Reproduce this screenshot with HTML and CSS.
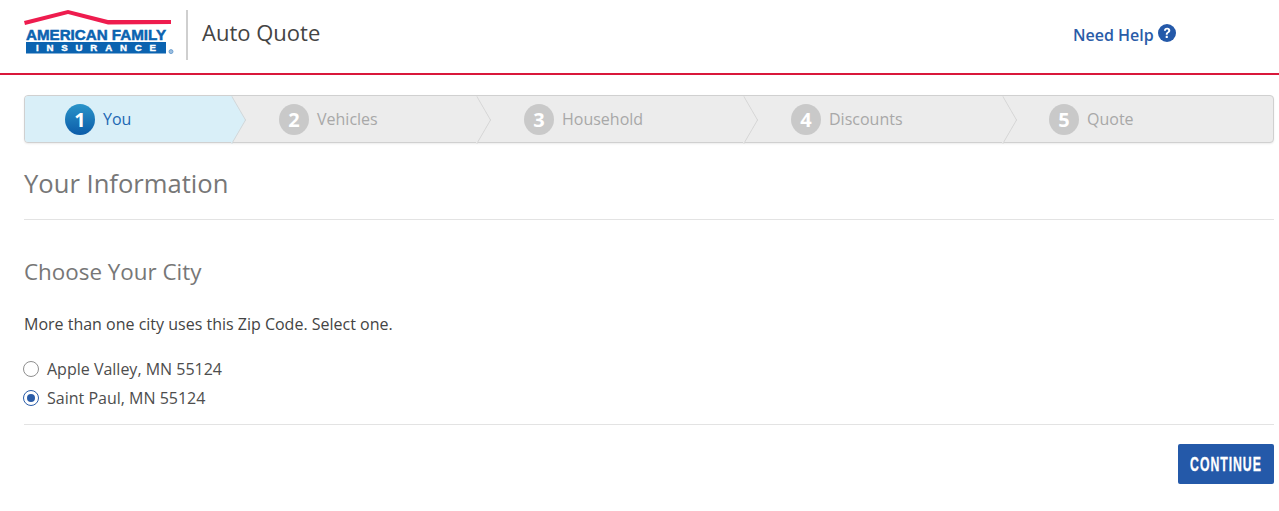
FILE: index.html
```html
<!DOCTYPE html>
<html lang="en">
<head>
<meta charset="utf-8">
<title>Auto Quote</title>
<link rel="stylesheet" href="styles.css">
</head>
<body>
<header class="site-header">
  <svg class="logo" viewBox="0 0 151 46" width="151" height="46" aria-label="American Family Insurance">
    <path class="logo-roof" d="M0 11 L44 0 L84 10 L147 10 V14 L84 14.5 L44 4 L1 15 Z"/>
    <text class="logo-top" x="2" y="30" textLength="140" lengthAdjust="spacingAndGlyphs">AMERICAN FAMILY</text>
    <rect class="logo-band" x="2" y="32" width="140" height="11.5"/>
    <text class="logo-sub" x="12" y="41" textLength="120">INSURANCE</text>
    <circle class="logo-reg" cx="147" cy="41.6" r="2"/>
  </svg>
  <div class="divider"></div>
  <div class="app-title">Auto Quote</div>
  <a class="help" href="#"><span>Need Help</span>
    <svg class="help-icon" viewBox="0 0 18 18" width="18" height="18"><circle cx="9" cy="9" r="9"/><path d="M5.9 6.7C6 4.9 7.3 3.8 9.2 3.8c1.8 0 3.1 1.1 3.1 2.7 0 1.2-.6 1.9-1.6 2.5-.8.5-1 .8-1 1.5v.3H7.8v-.5c0-1.1.4-1.7 1.3-2.3.8-.5 1.1-.9 1.1-1.5 0-.6-.4-1-1.1-1-.7 0-1.2.5-1.2 1.2Z"/><rect x="7.7" y="11.8" width="2.1" height="2.2" rx=".3"/></svg>
  </a>
</header>

<main class="content">
  <ol class="steps">
    <li class="step step-1 active"><span class="num">1</span><span class="label">You</span></li>
    <li class="step step-2"><span class="num">2</span><span class="label">Vehicles</span></li>
    <li class="step step-3"><span class="num">3</span><span class="label">Household</span></li>
    <li class="step step-4"><span class="num">4</span><span class="label">Discounts</span></li>
    <li class="step step-5"><span class="num">5</span><span class="label">Quote</span></li>
  </ol>

  <h1 class="page-title">Your Information</h1>
  <h2 class="section-title">Choose Your City</h2>
  <p class="intro">More than one city uses this Zip Code. Select one.</p>

  <form class="city-form">
    <label class="radio-row"><input type="radio" name="city"><span class="radio"></span>Apple Valley, MN 55124</label>
    <label class="radio-row"><input type="radio" name="city" checked><span class="radio"></span>Saint Paul, MN 55124</label>
    <div class="actions"><button class="continue" type="button"><span>CONTINUE</span></button></div>
  </form>
</main>
</body>
</html>
```

FILE: styles.css
```css
* { box-sizing: border-box; }
html, body { margin: 0; padding: 0; background: #fff; }
body { font-family: "Open Sans", "Liberation Sans", sans-serif; color: #3d3d3d; font-size: 16px; }

.site-header {
  height: 75px;
  border-bottom: 2px solid #d9183b;
  display: flex;
  align-items: flex-start;
  padding: 10px 0 0 24px;
}
.logo { display: block; flex: none; }
.logo-roof { fill: #ee1c4e; }
.logo-top { font-family: "Liberation Sans", sans-serif; font-weight: 700; font-size: 14.6px; fill: #0b63b0; stroke: #0b63b0; stroke-width: .5; }
.logo-band { fill: #0b63b0; }
.logo-sub { font-family: "Liberation Sans", sans-serif; font-weight: 700; font-size: 9.7px; fill: #fff; stroke: #fff; stroke-width: .4; }
.logo-reg { fill: #9dbfe0; stroke: #5b93c9; stroke-width: .8; }
.divider { width: 2px; height: 50px; background: #cfcfcf; margin: 0 0 0 11px; flex: none; }
.app-title { font-size: 22px; line-height: 30px; margin: 7px 0 0 14px; color: #444; }
.help {
  position: absolute;
  left: 1073px;
  top: 23px;
  display: flex;
  align-items: center;
  gap: 4px;
  font-size: 16px;
  font-weight: 600;
  line-height: 24px;
  color: #2a5ca8;
  text-decoration: none;
  white-space: nowrap;
}
.help-icon { margin-top: -4px; }
.help-icon circle { fill: #2459a9; }
.help-icon path, .help-icon rect { fill: #fff; }

.content { padding: 20px 5px 0 24px; }
.steps {
  list-style: none;
  margin: 0;
  padding: 0;
  display: flex;
  height: 48px;
  border: 1px solid #d0d0d0;
  border-radius: 4px;
  background: #ececec;
  box-shadow: 0 1px 2px rgba(0,0,0,.08);
}
.step {
  position: relative;
  display: flex;
  align-items: center;
  padding-left: 47px;
  color: #a8a8a8;
  font-size: 16px;
}
.step-1 { width: 207px; padding-left: 40px; border-radius: 3px 0 0 3px; }
.step-2 { width: 245px; }
.step-3 { width: 267px; }
.step-4 { width: 259px; }
.step-5 { flex: 1; padding-left: 46px; }
.step:not(.step-5)::after {
  content: "";
  position: absolute;
  z-index: 1;
  top: 6.5px;
  right: -16.5px;
  width: 33px;
  height: 33px;
  transform: scaleX(.58) rotate(45deg);
  border-top: 1px solid #d2d2d2;
  border-right: 1px solid #d2d2d2;
  background: #ececec;
}
.step.active { background: #d9eff8; color: #1c67b3; }
.step.active::after { background: #d9eff8; }
.num {
  width: 30px;
  height: 31px;
  border-radius: 50%;
  background: #c9c9c9;
  color: #fff;
  font-weight: 700;
  font-size: 20px;
  display: flex;
  align-items: center;
  justify-content: center;
  margin-right: 8px;
  flex: none;
}
.active .num { background: linear-gradient(#2a94c9, #0c5ca9); }

.page-title {
  margin: 0;
  padding: 23px 0 18px;
  font-size: 25.6px;
  line-height: 35px;
  font-weight: 400;
  color: #777;
  border-bottom: 1px solid #e3e3e3;
}
.section-title {
  margin: 34px 0 0;
  font-size: 22.4px;
  line-height: 35px;
  font-weight: 400;
  color: #777;
}
.intro { margin: 24px 0 0; font-size: 16px; line-height: 22px; color: #444; }
.city-form { margin-top: 19px; }
.radio-row {
  display: flex;
  align-items: center;
  height: 29px;
  font-size: 16px;
  color: #4d4d4d;
}
.radio-row input { position: absolute; opacity: 0; }
.radio {
  width: 16px;
  height: 16px;
  border-radius: 50%;
  border: 1px solid #8f8f8f;
  margin: 0 8px 0 -1px;
  background: #fff;
  flex: none;
  display: flex;
  align-items: center;
  justify-content: center;
}
input:checked + .radio { border-color: #2a5ca8; }
input:checked + .radio::before { content: ""; width: 8px; height: 8px; border-radius: 50%; background: #2a5ca8; }
.actions {
  margin-top: 12px;
  border-top: 1px solid #e3e3e3;
  padding-top: 19px;
  display: flex;
  justify-content: flex-end;
}
.continue {
  width: 96px;
  height: 40px;
  border: 0;
  border-radius: 2px;
  background: #2459a9;
  color: #fff;
  font-family: "Liberation Sans", sans-serif;
  font-weight: 700;
  font-size: 19.5px;
  letter-spacing: 1.5px;
  -webkit-text-stroke: .3px #fff;
  padding: 0;
  display: flex;
  align-items: center;
  justify-content: center;
}
.continue span { display: block; flex: none; transform: scaleX(.63); }
```
